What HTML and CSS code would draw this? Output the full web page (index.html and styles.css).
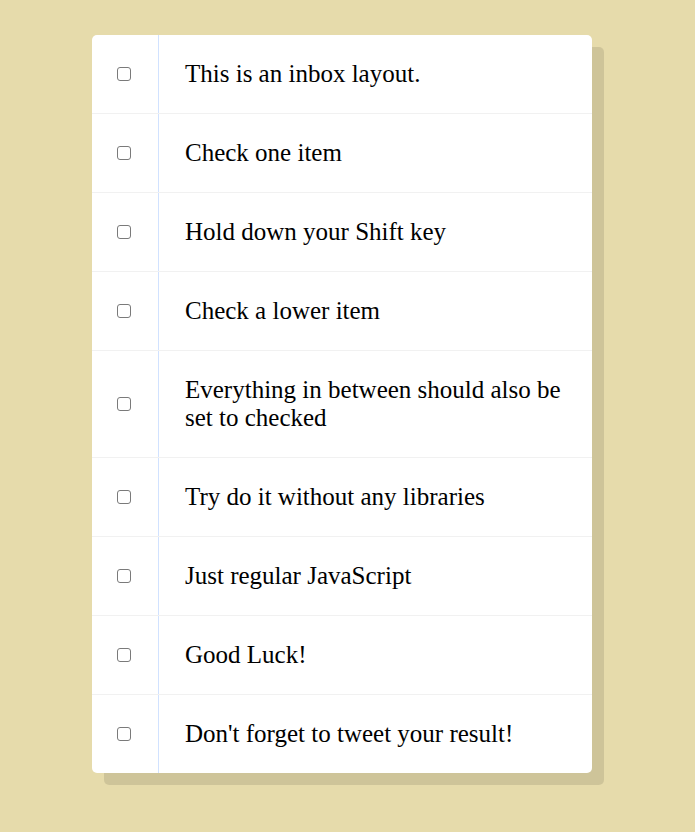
FILE: index.html
```html
<!DOCTYPE html>
<html lang="en">
<head>
<meta charset="UTF-8">
<title>Hold Shift to Check Multiple Checkboxes</title>
<link rel="stylesheet" href="styles.css">
</head>
<body>
<div class="inbox">
  <div class="item"><input type="checkbox"><p>This is an inbox layout.</p></div>
  <div class="item"><input type="checkbox"><p>Check one item</p></div>
  <div class="item"><input type="checkbox"><p>Hold down your Shift key</p></div>
  <div class="item"><input type="checkbox"><p>Check a lower item</p></div>
  <div class="item"><input type="checkbox"><p>Everything in between should also be set to checked</p></div>
  <div class="item"><input type="checkbox"><p>Try do it without any libraries</p></div>
  <div class="item"><input type="checkbox"><p>Just regular JavaScript</p></div>
  <div class="item"><input type="checkbox"><p>Good Luck!</p></div>
  <div class="item"><input type="checkbox"><p>Don't forget to tweet your result!</p></div>
</div>
</body>
</html>
```

FILE: styles.css
```css
html {
  background: #e6dbab;
  font-family: "Liberation Serif", "Times New Roman", serif;
}

body {
  margin: 0;
  padding: 35px 0;
}

.inbox {
  width: 500px;
  margin: 0 auto 0 92px;
  background: #ffffff;
  border-radius: 5px;
  box-shadow: 12px 12px 0 rgba(0, 0, 0, 0.1);
}

.item {
  display: flex;
  align-items: center;
  border-bottom: 1px solid #f1f1f1;
}

.item:last-child {
  border-bottom: 0;
}

.item input[type="checkbox"] {
  appearance: none;
  -webkit-appearance: none;
  box-sizing: border-box;
  width: 14px;
  height: 14px;
  margin: 0 27px 0 25px;
  border: 1.5px solid #7a7a7a;
  border-radius: 3px;
  background: #ffffff;
  flex: none;
}

.item p {
  flex: 1;
  margin: 0;
  padding: 25px 25px 25px 26px;
  font-size: 25px;
  line-height: 28px;
  color: #000000;
  border-left: 1px solid #d1e2ff;
}
```
